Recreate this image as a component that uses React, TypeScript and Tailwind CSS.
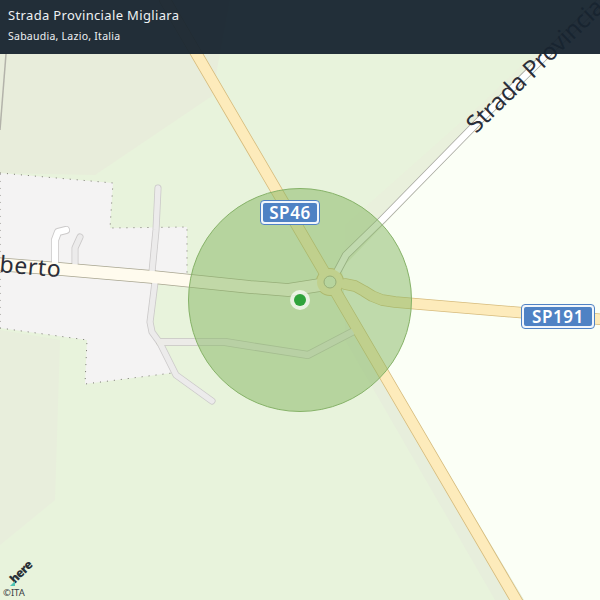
const labelFont = "'Noto Sans', 'Open Sans', sans-serif"

// road centre lines: [points, casing width, fill width, casing colour, fill colour]
const roads: [string, number, number, string, string][] = [
  ['158,188 156,230 152,272', 7, 5.4, '#cbc9c9', '#ecebeb'],
  ['155,282 150,322 152,332 160,343 176,375 212,401', 7, 5.4, '#cbc9c9', '#ecebeb'],
  ['160,342 225,342 250,346 308,355 354,331', 8, 6.4, '#c6c5c0', '#ecebe8'],
  ['55,264 55,240 58,232 66,230', 8, 6.4, '#cbc9c9', '#ffffff'],
  ['75,264 75,248 80,237', 7, 5.4, '#cbc9c9', '#ecebeb'],
  ['338,270 346,255 382,220 478,122 610,-8', 8, 6.4, '#a9a9a2', '#ffffff'],
  ['-5,264 60,269 153,277 250,287 288,290 320,285', 13.5, 12, '#a8a590', '#fffbee'],
  ['345,284 355,286 364,291 372,296 382,300 395,302 412,303.5 610,320', 11.5, 10, '#d6bb7c', '#fdebbb'],
  ['165,0 330,282 522,610', 12, 10.4, '#d6bb7c', '#fdebbb'],
]

function MapBase() {
  return (
    <svg className="absolute inset-0" width="600" height="600" viewBox="0 0 600 600">
      <rect width="600" height="600" fill="#e8f3dc" />
      <polygon points="0,0 230,0 212,96 95,175 0,173" fill="#e8eddb" />
      <polygon points="0,330 60,340 55,500 0,545" fill="#e8eedc" />
      <polygon points="345,225 480,105 600,-10 345,270" fill="#e9f0dc" />
      <polygon points="342,268 600,0 600,600 524,600 345,305" fill="#fbfff6" />
      <polygon points="345,300 524,600 495,600 345,340" fill="#e7eedc" />

      {/* built up area */}
      <polygon
        points="0,173 113,183 110,228 187,227 187,280 157,278 151,325 160,345 172,373 85,384 87,340 0,328"
        fill="#f4f3f3"
        stroke="#77756f"
        strokeWidth="1"
        strokeDasharray="1 6"
      />

      <line x1="6" y1="54" x2="0" y2="130" stroke="#b3b3aa" strokeWidth="1.5" />

      {/* casings first so junctions merge */}
      <g fill="none" strokeLinecap="round" strokeLinejoin="round">
        {roads.map(([points, casing, , casingColour]) => (
          <polyline key={points} points={points} stroke={casingColour} strokeWidth={casing} />
        ))}
        <circle cx="330" cy="282" r="14" fill="#d6bb7c" />
        {roads.map(([points, , width, , colour]) => (
          <polyline key={points} points={points} stroke={colour} strokeWidth={width} />
        ))}
      </g>

      {/* roundabout */}
      <circle cx="330" cy="282" r="13" fill="#fdebbb" />
      <circle cx="330" cy="282" r="6" fill="#e8f3dc" stroke="#a8a590" />

      <g fill="#2b2e39" style={{ fontFamily: labelFont }}>
        <text x="0" y="0" fontSize="23" letterSpacing="0.6" transform="translate(-1 272) rotate(5)">berto</text>
        <text x="0" y="0" fontSize="24" letterSpacing="-0.1" transform="translate(476 134) rotate(-44)">Strada Provinciale</text>
      </g>

      {/* accuracy circle */}
      <circle cx="300" cy="300" r="111.5" fill="#83b55f" fillOpacity="0.5" stroke="#86b268" />
      <circle cx="300" cy="300" r="10" fill="#ffffff" fillOpacity="0.7" />
      <circle cx="300" cy="300" r="6" fill="#2fa33b" />
    </svg>
  )
}

function Shield({ label, className }: { label: string; className: string }) {
  return (
    <div className={`absolute flex items-center justify-center rounded-[4px] border-[1px] border-[#4f82c4] bg-[#f2f6fb] p-[2px] ${className}`}>
      <span className="flex h-full w-full items-center justify-center rounded-[2px] bg-[#4f82c4] text-[17px] font-semibold leading-none tracking-[0.6px] text-white">
        {label}
      </span>
    </div>
  )
}

export default function App() {
  return (
    <div className="relative h-[600px] w-[600px] overflow-hidden" style={{ fontFamily: labelFont }}>
      <MapBase />

      <Shield label="SP46" className="left-[260px] top-[200px] h-[25px] w-[60px]" />
      <Shield label="SP191" className="left-[521px] top-[304px] h-[25px] w-[74px]" />

      {/* Header */}
      <header className="relative flex h-[54px] flex-col bg-[#17242f]/95 pl-2 pt-[5px] text-[#eef1f3]">
        <h1 className="text-[13px] font-normal leading-[20px] tracking-[0.35px]">Strada Provinciale Migliara</h1>
        <p className="mt-[3px] text-[10.5px] leading-[16px] tracking-[0.25px]">Sabaudia, Lazio, Italia</p>
      </header>

      {/* Attribution */}
      <div className="absolute bottom-[2px] left-[3px] flex flex-col items-start gap-[3px]">
        <div className="flex h-[24px] w-[36px] items-center justify-center">
          <span className="-rotate-45 text-[12px] font-black leading-none tracking-[-0.5px] text-[#2a3138]">here</span>
        </div>
        <span className="text-[9.5px] leading-[11px] text-[#3a4045]">©ITA</span>
      </div>
      <div className="absolute left-[10px] top-[581px] h-0 w-0 border-b-[5px] border-l-[5px] border-b-[#4fc4b4] border-l-transparent" />
    </div>
  )
}
